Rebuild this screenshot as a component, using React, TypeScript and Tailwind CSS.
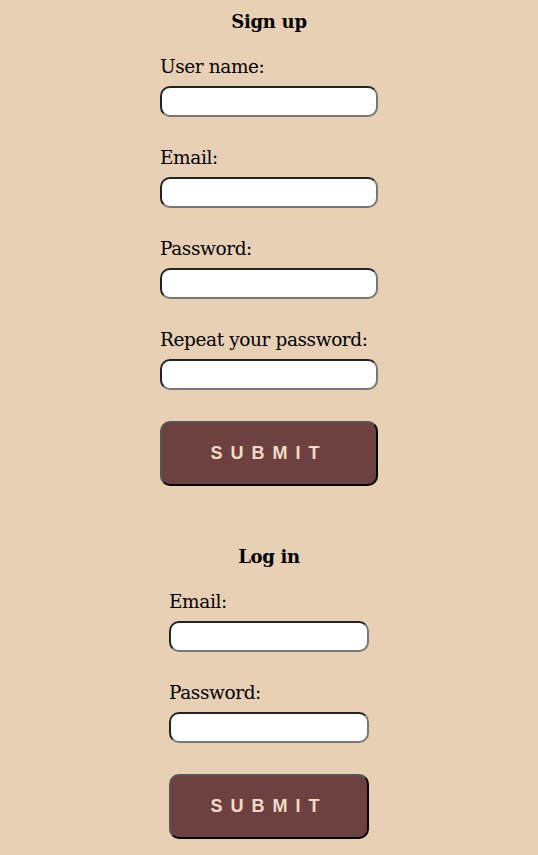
import { useState } from "react";

type Field = {
  id: string;
  label: string;
  type: string;
};

const signupFields: Field[] = [
  { id: "username", label: "User name:", type: "text" },
  { id: "email", label: "Email:", type: "email" },
  { id: "password", label: "Password:", type: "password" },
  { id: "repeat", label: "Repeat your password:", type: "password" },
];

const loginFields: Field[] = [
  { id: "login-email", label: "Email:", type: "email" },
  { id: "login-password", label: "Password:", type: "password" },
];

function FormField({ field }: { field: Field }) {
  const [value, setValue] = useState("");
  return (
    <div className="flex flex-col">
      <label
        htmlFor={field.id}
        className="whitespace-nowrap text-[18.5px] leading-[24px] tracking-[-0.4px] text-black"
      >
        {field.label}
      </label>
      <input
        id={field.id}
        type={field.type}
        value={value}
        onChange={(e) => setValue(e.target.value)}
        className="mt-[7px] h-[31px] w-full rounded-[10px] border-2 border-t-[#222] border-l-[#222] border-b-[#777] border-r-[#777] bg-white px-2 text-[15px] outline-none"
      />
    </div>
  );
}

function SubmitButton() {
  return (
    <button
      type="submit"
      className="mt-[31px] h-[65px] w-full rounded-[10px] border-2 border-t-[#555] border-l-[#555] border-b-black border-r-black bg-[#6e4141] font-['Liberation_Sans',Arial,sans-serif] text-[18px] font-bold tracking-[8px] text-[#f3dcc3]"
    >
      SUBMIT
    </button>
  );
}

function AuthForm({ title, fields, width }: { title: string; fields: Field[]; width: string }) {
  return (
    <form onSubmit={(e) => e.preventDefault()} className={`flex flex-col ${width}`}>
      <h2 className="text-center text-[18px] font-bold leading-[24px] tracking-[-0.3px] text-black">
        {title}
      </h2>
      <div className="mt-[21px] flex flex-col gap-[29px]">
        {fields.map((f) => (
          <FormField key={f.id} field={f} />
        ))}
      </div>
      <SubmitButton />
    </form>
  );
}

export default function App() {
  return (
    <main className="min-h-screen bg-[#e8d0b4] font-['DejaVu_Serif','Liberation_Serif',serif]">
      <div className="flex flex-col items-center pt-[10px] pb-[18px]">
        <AuthForm title="Sign up" fields={signupFields} width="w-[218px]" />
        <div className="mt-[59px]">
          <AuthForm title="Log in" fields={loginFields} width="w-[200px]" />
        </div>
      </div>
    </main>
  );
}
